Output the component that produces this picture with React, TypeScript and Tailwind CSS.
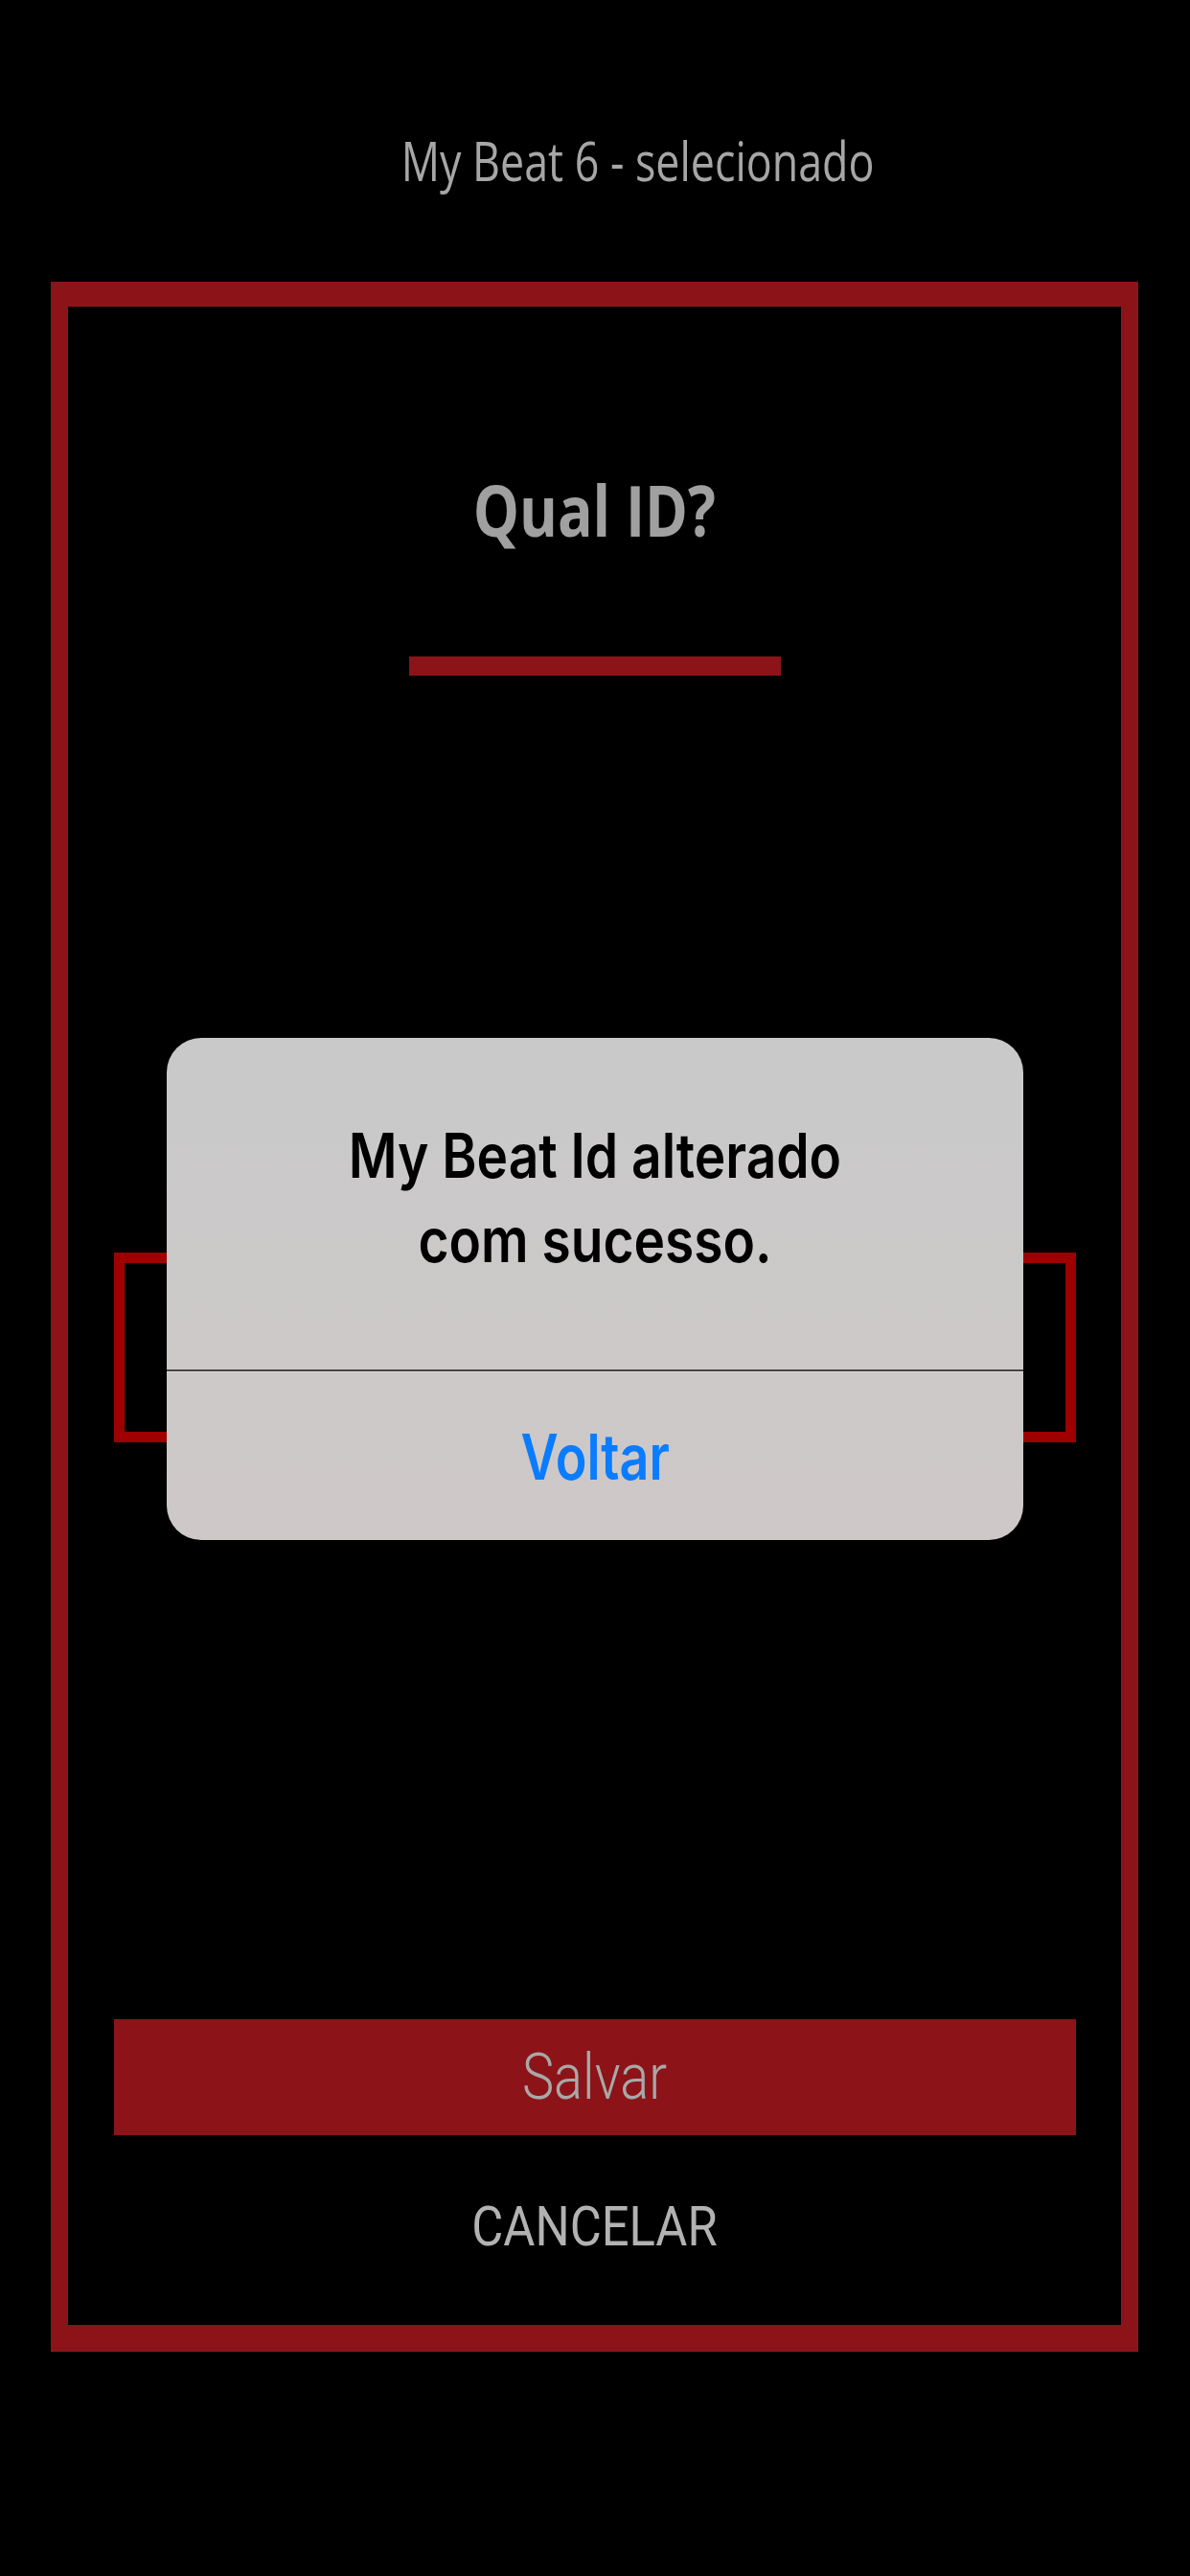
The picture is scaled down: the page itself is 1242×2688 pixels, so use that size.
import React from "react";

export default function App() {
  return (
    <div className="relative w-[1242px] h-[2688px] bg-black flex flex-col overflow-hidden">
      {/* Header */}
      <div className="h-[294px] pt-[139px] pl-[90px] flex justify-center">
        <span className="inline-block scale-x-[0.8] font-['Open_Sans',sans-serif] text-[56px] leading-none text-[#a6a6a6] whitespace-nowrap">
          My Beat 6 - selecionado
        </span>
      </div>

      {/* Frame */}
      <div className="ml-[53px] w-[1135px] h-[2160px] border-x-[18px] border-t-[26px] border-b-[28px] border-[#8c1418] flex flex-col items-center">
        <div className="mt-[175px] h-[74px] flex items-start justify-center">
          <span className="inline-block scale-x-[0.82] font-['Open_Sans',sans-serif] font-bold text-[74px] leading-none text-[#a0a0a0] whitespace-nowrap">
            Qual ID?
          </span>
        </div>
        <div className="mt-[116px] w-[388px] h-[20px] bg-[#8c1418]" />
        <div className="mt-[602px] w-[1004px] h-[198px] border-[11px] border-[#9e0000]" />
        <div className="mt-[602px] w-[1004px] h-[121px] bg-[#8c1418] flex items-center justify-center">
          <span className="inline-block scale-x-[0.835] font-['Roboto',sans-serif] font-light text-[67px] leading-none text-[#a8a8a8] whitespace-nowrap">
            Salvar
          </span>
        </div>
        <div className="mt-[66px] h-[58px] flex items-center justify-center">
          <span className="inline-block scale-x-[0.875] font-['Roboto',sans-serif] text-[58px] leading-none text-[#b2b2b2] whitespace-nowrap">
            CANCELAR
          </span>
        </div>
      </div>

      {/* Alert */}
      <div className="absolute left-[174px] top-[1083px] w-[894px] h-[524px] rounded-[36px] overflow-hidden bg-linear-to-b from-[#c9c9c9] to-[#cec8c8] flex flex-col">
        <div className="h-[346px] pt-[79px] flex flex-col items-center">
          <span className="inline-block scale-x-[0.86] font-['Inter',sans-serif] font-semibold text-[64px] leading-[88px] text-black text-center whitespace-nowrap">
            My Beat Id alterado
            <br />
            com sucesso.
          </span>
        </div>
        <div className="h-[2px] bg-[#444444]" />
        <div className="h-[1px] bg-[#dedada]" />
        <div className="flex-1 flex items-center justify-center">
          <span className="inline-block scale-x-[0.815] font-['Inter',sans-serif] font-semibold text-[66px] leading-none text-[#0a7cff] whitespace-nowrap">
            Voltar
          </span>
        </div>
      </div>
    </div>
  );
}
